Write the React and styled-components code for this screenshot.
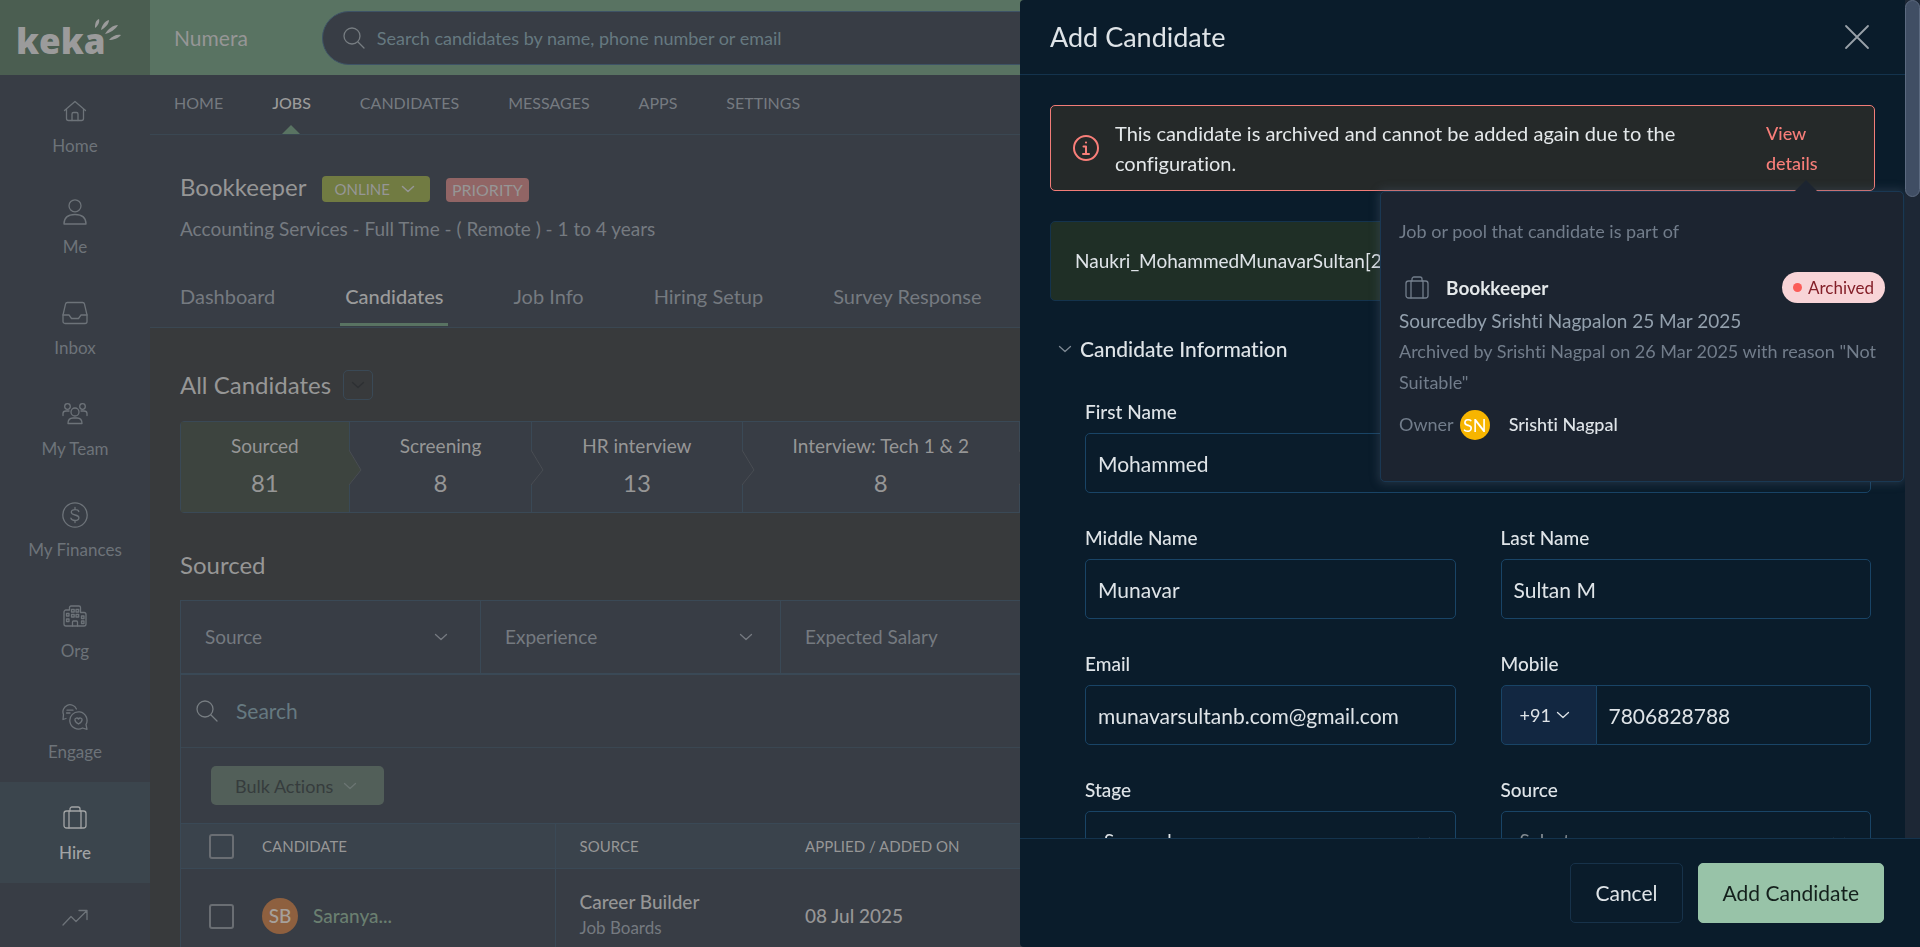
import styled, { createGlobalStyle, css } from 'styled-components';

const GlobalStyle = createGlobalStyle`
  *, *::before, *::after {
    box-sizing: border-box;
  }
  body {
    margin: 0;
    background: #383a3c;
    color: #969696;
    font-family: Lato, 'Open Sans', sans-serif;
    font-size: 18px;
    font-variant-ligatures: none;
    line-height: 24px;
    overflow: hidden;
  }
  button, input, select {
    font: inherit;
    color: inherit;
  }
  h1, h2, h3, p {
    margin: 0;
    font-weight: 400;
  }
  a {
    color: inherit;
    text-decoration: none;
  }
`;

/* ---------- icons ---------- */

const Svg = styled.svg`
  display: block;
  flex: none;
  fill: none;
  stroke: currentColor;
  stroke-linecap: round;
  stroke-linejoin: round;
`;

const Icon = ({ w = 26, h = w, stroke = 1.3, children, ...rest }) => (
  <Svg width={w} height={h} viewBox={`0 0 ${w} ${h}`} strokeWidth={stroke} aria-hidden="true" {...rest}>
    {children}
  </Svg>
);

const Chevron = (props) => (
  <Icon w={14} h={8} {...props}>
    <path d="M1.5 1.5 7 6.5l5.5-5" />
  </Icon>
);

const SearchIcon = () => (
  <Icon w={22}>
    <circle cx="9" cy="9" r="8" />
    <path d="m15 15 6 6" />
  </Icon>
);

const CaseIcon = (props) => (
  <Icon {...props}>
    <rect x="2" y="6" width="22" height="17" rx="2.5" />
    <path d="M8 6V4a2 2 0 0 1 2-2h6a2 2 0 0 1 2 2v2M7 6v17M19 6v17" />
  </Icon>
);

const HomeIcon = () => (
  <Icon>
    <path d="M2.5 12.5 13 3.5l10.5 9M4.5 11v9.5a2 2 0 0 0 2 2h13a2 2 0 0 0 2-2V11" />
    <path d="M10 22.5V16a1.5 1.5 0 0 1 1.5-1.5h3A1.5 1.5 0 0 1 16 16v6.5" />
  </Icon>
);

const MeIcon = () => (
  <Icon>
    <circle cx="13" cy="6.8" r="6" />
    <path d="M2 25c0-6 4-9.5 11-9.5S24 19 24 25Z" />
  </Icon>
);

const InboxIcon = () => (
  <Icon>
    <path d="M5.5 2.5h15a2 2 0 0 1 2 1.6L25 15v6.500a2 2 0 0 1-2 2H3a2 2 0 0 1-2-2V15L3.500 4.100a2 2 0 0 1 2-1.600Z" />
    <path d="M1 15h6l2.500 3.500h7L19 15h6" />
  </Icon>
);

const TeamIcon = () => (
  <Icon>
    <circle cx="13" cy="11" r="4" />
    <circle cx="5.5" cy="5.5" r="2.8" />
    <circle cx="20.5" cy="5.5" r="2.8" />
    <path d="M6 22.5c0-4 2-5.5 5-5.5h4c3 0 5 1.5 5 5.5ZM1 14.5v-2c0-2 1-2.5 3-2.5h3M25 14.5v-2c0-2-1-2.5-3-2.5h-3" />
  </Icon>
);

const FinanceIcon = () => (
  <Icon>
    <circle cx="13" cy="13" r="12.2" />
    <path d="M16.8 9.5C16.4 8 15 7.6 13 7.6c-2.2 0-3.7.9-3.7 2.6 0 3.8 7.600 1.800 7.600 5.600 0 1.700-1.600 2.700-3.900 2.700s-3.800-.7-4.100-2.300M13 5.500v2M13 18.500v2" />
  </Icon>
);

const OrgIcon = () => (
  <Icon>
    <path d="M7.5 7V4.5a1.5 1.5 0 0 1 1.5-1.5h8a1.5 1.5 0 0 1 1.5 1.5v5M7.5 7H4a2 2 0 0 0-2 2v12a2 2 0 0 0 2 2h18a2 2 0 0 0 2-2V11.5a2 2 0 0 0-2-2h-3.5" />
    <path d="M10.5 23v-4a1 1 0 0 1 1-1h3a1 1 0 0 1 1 1v4" />
    <path d="M9.5 6.5h2.7v2.5H9.5zM14 6.5h2.7v2.5H14zM9.5 11.5h2.7V14H9.5zM14 11.5h2.7V14H14zM4.5 10.5h2.5V13H4.5zM4.5 16h2.5v2.5H4.5zM19.5 13h2.5v2.5h-2.5zM19.5 18h2.5v2.5h-2.5z" />
  </Icon>
);

const EngageIcon = () => (
  <Icon>
    <path d="M4 14.500 1 15.500l.5-5A7 7 0 1 1 14.400 5M5 6.200h6M4.500 9h3.500" />
    <path d="M24 20.500a8.600 8.600 0 1 0-3.500 3.500l4.500 1.300Z" />
    <path d="M16.500 20c-2.300-1.300-3.600-2.700-3.600-4.200 0-2 2.700-2.500 3.600-.7.9-1.800 3.600-1.300 3.600.7 0 1.500-1.300 2.900-3.600 4.200Z" />
  </Icon>
);

const TrendIcon = () => (
  <Icon>
    <path d="m1 19 8-8.500 5 5L25 4.500M17 4.500h8v9" />
  </Icon>
);

const InfoIcon = () => (
  <Icon stroke={2}>
    <circle cx="13" cy="13" r="12" />
    <path d="M10.5 11.5H13V19M10 19h6M12.9 7.5h.2" />
  </Icon>
);

/* ---------- page behind the drawer ---------- */

const Shell = styled.div`
  display: grid;
  grid-template: 75px minmax(0, 1fr) / 150px minmax(0, 1fr);
  height: 100vh;
  overflow: hidden;
`;

const LogoCell = styled.a`
  background: #4b5e51;
  padding: 14px 0 0 16px;
  svg {
    display: block;
  }
  text {
    font-family: 'Open Sans', Lato, sans-serif;
    font-weight: 800;
    font-size: 35px;
  }
`;

const TopBar = styled.header`
  display: flex;
  align-items: center;
  gap: 74px;
  padding-left: 24px;
  background: #597362;
`;

const Company = styled.span`
  font-size: 21px;
`;

const GlobalSearch = styled.label`
  display: flex;
  align-items: center;
  gap: 12px;
  width: 900px;
  height: 54px;
  padding: 0 20px;
  border: 1px solid #3e5366;
  border-radius: 27px;
  background: #383d45;
  color: #777d82;
`;

const BareInput = styled.input`
  flex: 1;
  min-width: 0;
  padding: 0;
  border: 0;
  outline: 0;
  background: none;
  font-size: ${({ $size }) => $size || 18}px;
  &::placeholder {
    color: #667980;
    opacity: 1;
  }
`;

const Sidebar = styled.nav`
  background: #383d45;
  overflow: hidden;
`;

const SideItem = styled.a`
  display: flex;
  flex-direction: column;
  align-items: center;
  gap: 10px;
  height: 101px;
  padding-top: 23px;
  font-size: 17px;
  color: #6d7379;
  ${({ $active }) =>
    $active &&
    css`
      background: #3b454d;
      color: #a2a4a5;
      font-weight: 500;
    `}
`;

const Main = styled.main`
  min-width: 0;
  overflow: hidden;
`;

const SubNav = styled.nav`
  display: flex;
  gap: 49px;
  height: 60px;
  padding-left: 24px;
  border-bottom: 1px solid #3a4752;
  background: #383d45;
`;

const SubLink = styled.a`
  position: relative;
  line-height: 56px;
  font-size: 16px;
  color: ${({ $active }) => ($active ? '#9b9b9b' : '#757a80')};
  font-weight: ${({ $active }) => ($active ? 500 : 400)};
  ${({ $active }) =>
    $active &&
    css`
      &::after {
        content: '';
        position: absolute;
        left: 50%;
        bottom: 0;
        margin-left: -9px;
        border: 9px solid transparent;
        border-top: 0;
        border-bottom-color: #597362;
      }
    `}
`;

const JobHeader = styled.section`
  padding: 37px 30px 0;
  border-bottom: 1px solid #3a4752;
  background: #383d45;
`;

const TitleRow = styled.div`
  display: flex;
  align-items: flex-end;
  gap: 16px;
  height: 30px;
`;

const Title = styled.h1`
  font-size: 24px;
  line-height: 30px;
`;

const StatusButton = styled.button`
  display: flex;
  align-items: center;
  gap: 11px;
  height: 26px;
  padding: 0 15px 0 12px;
  border: 0;
  border-radius: 4px;
  background: #717b42;
  font-size: 15px;
`;

const Priority = styled.span`
  height: 24px;
  padding: 0 6px;
  border-radius: 4px;
  background: #916565;
  font-size: 16px;
`;

const JobMeta = styled.p`
  margin-top: 15px;
  color: #757a80;
  font-size: 19px;
`;

const Tabs = styled.nav`
  display: flex;
  gap: 60px;
  margin: 37px -5px 1px;
`;

const Tab = styled.a`
  height: 48px;
  padding: 6px 5px 0;
  font-size: 20px;
  color: ${({ $active }) => ($active ? '#9b9b9b' : '#757a80')};
  font-weight: ${({ $active }) => ($active ? 500 : 400)};
  border-bottom: 3px solid ${({ $active }) => ($active ? '#597362' : 'transparent')};
`;

const Content = styled.div`
  padding: 42px 30px 0;
`;

const SectionTitle = styled.h2`
  font-size: 24px;
  line-height: 30px;
`;

const HeadingRow = styled.div`
  display: flex;
  gap: 12px;
`;

const SquareButton = styled.button`
  display: grid;
  place-items: center;
  width: 30px;
  height: 30px;
  padding: 0;
  border: 1px solid #3a4956;
  border-radius: 5px;
  background: none;
  color: #2d3033;
`;

const Pipeline = styled.div`
  display: flex;
  height: 92px;
  margin: 21px 0 37px;
  border: 1px solid #3a4956;
  border-radius: 4px;
  background: #383d45;
`;

const Stage = styled.a`
  position: relative;
  display: flex;
  flex: none;
  flex-direction: column;
  align-items: center;
  gap: 13px;
  padding: 12px 50px 0;
  border-right: 1px solid #3a4956;
  background: ${({ $active }) => ($active ? '#3d443f' : 'none')};
  font-size: 19px;
  strong {
    font-size: 24px;
    font-weight: 400;
  }
`;

const StageArrow = styled(Svg)`
  position: absolute;
  left: 100%;
  top: 27px;
  z-index: 1;
`;

const Panel = styled.div`
  margin-top: 20px;
  border: 1px solid #3a4956;
  background: #383d45;
`;

const Filters = styled.div`
  display: flex;
  border-bottom: 2px solid #3a4956;
`;

const SelectBox = styled.div`
  display: grid;
  align-items: center;
  select,
  svg {
    grid-area: 1 / 1;
  }
  svg {
    justify-self: end;
    margin-right: ${({ $inset }) => $inset}px;
    pointer-events: none;
  }
  select {
    width: 100%;
    height: 100%;
    appearance: none;
    border: 0;
    outline: 0;
    background: none;
  }
`;

const Filter = styled(SelectBox)`
  flex: none;
  width: 300px;
  height: 72px;
  border-right: 1px solid #3a4956;
  color: #757a80;
  font-size: 19px;
  select {
    padding: 0 24px;
  }
`;

const SearchRow = styled.label`
  display: flex;
  align-items: center;
  gap: 18px;
  height: 73px;
  padding: 0 15px;
  border-bottom: 1px solid #3a4752;
  color: #777d82;
`;

const BulkRow = styled.div`
  padding: 18px 30px;
`;

const BulkButton = styled.button`
  display: flex;
  align-items: center;
  gap: 10px;
  height: 39px;
  padding: 0 27px 0 24px;
  border: 0;
  border-radius: 5px;
  background: #525f59;
  color: #363c3d;
  svg {
    color: #6b7573;
  }
`;

const Table = styled.table`
  width: 100%;
  table-layout: fixed;
  border-collapse: collapse;
  text-align: left;
  th {
    height: 45px;
    padding: 0 24px;
    border: solid #3a4956;
    border-width: 1px 0;
    background: #3a434c;
    font-size: 15px;
    font-weight: 400;
  }
  td {
    height: 95px;
    padding: 0 24px;
    font-size: 19px;
    font-weight: 500;
  }
  th:nth-child(2),
  td:nth-child(2) {
    padding-left: 0;
    border-right: 1px solid #3a4956;
  }
  th:first-child,
  td:first-child {
    padding: 0 0 0 28px;
  }
  small {
    display: block;
    color: #757a80;
    font-size: 17px;
    font-weight: 400;
    line-height: 28px;
  }
`;

const Check = styled.input`
  display: block;
  appearance: none;
  width: 25px;
  height: 25px;
  margin: 0;
  border: 2px solid #6a6e73;
  border-radius: 3px;
`;

const Avatar = styled.span`
  display: inline-grid;
  place-items: center;
  flex: none;
  width: ${({ $size }) => $size}px;
  height: ${({ $size }) => $size}px;
  border-radius: 50%;
  background: ${({ $color }) => $color};
`;

const Person = styled.a`
  display: flex;
  align-items: center;
  gap: 15px;
  color: #6a7f70;
  ${Avatar} {
    color: #a6a09b;
  }
`;

/* ---------- drawer ---------- */

const Drawer = styled.aside`
  position: fixed;
  inset: 0 0 0 auto;
  z-index: 10;
  display: flex;
  flex-direction: column;
  width: 900px;
  max-width: 100vw;
  overflow: hidden;
  border-radius: 4px 0 0 4px;
  background: #0a1c2b;
  color: #dfe4e8;
`;

const DrawerScroll = styled.div`
  display: flex;
  flex: 1;
  min-height: 0;
`;

const DrawerPane = styled.div`
  flex: 1;
  min-width: 0;
  overflow: hidden;
`;

const Rail = styled.div`
  width: 15px;
  background: #1d2735;
`;

const Thumb = styled.div`
  height: 197px;
  border: 1px solid #5c6a80;
  border-radius: 8px;
  background: #404e64;
`;

const DrawerHeader = styled.header`
  display: flex;
  align-items: center;
  justify-content: space-between;
  height: 75px;
  padding: 0 35px 0 30px;
  border-bottom: 1px solid #14334d;
  h2 {
    font-size: 27px;
    line-height: 36px;
  }
`;

const CloseButton = styled.button`
  padding: 0;
  border: 0;
  background: none;
  color: #99a1a9;
`;

const DrawerBody = styled.div`
  padding: 30px;
`;

const Alert = styled.div`
  position: relative;
  display: flex;
  align-items: center;
  height: 86px;
  padding: 0 22px;
  border: 1px solid #f27c78;
  border-radius: 5px;
  background: #252929;
  color: #f87e79;
  line-height: 30px;
`;

const AlertText = styled.p`
  flex: 1;
  margin: 0 66px 0 16px;
  color: #e4e8ea;
  font-size: 20px;
`;

const ViewDetails = styled.a`
  width: 86px;
  font-weight: 500;
`;

const Popover = styled.div`
  position: absolute;
  top: 85px;
  right: -30px;
  z-index: 2;
  width: 524px;
  height: 291px;
  padding: 24px 18px;
  border: 1px solid #1a3853;
  border-radius: 5px;
  background: #1c2430;
  box-shadow: 0 0 8px 2px rgba(70, 85, 105, 0.4);
  color: #727d8b;
  line-height: 31px;
`;

const PopoverArrow = styled.span`
  position: absolute;
  bottom: 100%;
  right: 85px;
  border: 12px solid transparent;
  border-top: 0;
  border-bottom-color: #1c2430;
`;

const PoolRow = styled.div`
  display: flex;
  align-items: center;
  margin: 25px 0 0 5px;
  h3 {
    flex: 1;
    margin-left: 16px;
    color: #e4e8ea;
    font-size: 19px;
    font-weight: 700;
  }
`;

const Pill = styled.span`
  display: flex;
  align-items: center;
  gap: 6px;
  height: 31px;
  padding: 0 11px;
  border-radius: 16px;
  background: #f8d4d7;
  color: #842029;
  font-size: 17px;
  &::before {
    content: '';
    width: 9px;
    height: 9px;
    border-radius: 50%;
    background: #fb5c58;
  }
`;

const SourcedBy = styled.p`
  margin-top: 2px;
  color: #93a0ad;
  font-size: 19px;
`;

const OwnerRow = styled.div`
  display: flex;
  align-items: center;
  gap: 6px;
  margin-top: 11px;
  ${Avatar} {
    color: #fff;
  }
  b {
    margin-left: 13px;
    color: #dfe4e8;
    font-weight: 500;
  }
`;

const FileBox = styled.div`
  display: flex;
  align-items: center;
  height: 80px;
  margin: 30px 0 33px;
  padding: 0 24px;
  border: 1px solid #14334d;
  border-radius: 5px;
  background: #1f2f26;
  font-size: 19px;
`;

const GroupToggle = styled.button`
  display: flex;
  align-items: center;
  gap: 8px;
  height: 30px;
  padding: 0;
  margin-left: 8px;
  border: 0;
  background: none;
  font-size: 21px;
  font-weight: 500;
  svg {
    color: #7d8893;
  }
`;

const Form = styled.form`
  display: grid;
  grid-template-columns: 1fr 1fr;
  gap: 33px 45px;
  margin: 36px 4px 0 35px;
`;

const Field = styled.div`
  display: grid;
  grid-template-rows: 24px 60px;
  gap: 9px;
  grid-column: ${({ $wide }) => ($wide ? '1 / -1' : 'auto')};
  label {
    font-size: 19px;
    font-weight: 500;
  }
`;

const fieldBox = css`
  width: 100%;
  height: 60px;
  border: 1px solid #194466;
  border-radius: 5px;
  background: transparent;
`;

const TextInput = styled.input`
  ${fieldBox}
  min-width: 0;
  padding: 0 12px;
  outline: 0;
  font-size: 21px;
`;

const FieldSelect = styled(SelectBox)`
  ${fieldBox}
  color: ${({ $empty }) => ($empty ? '#848c93' : 'inherit')};
  font-size: 19px;
  select {
    padding: 0 18px;
  }
`;

const Phone = styled.div`
  display: flex;
  ${TextInput} {
    border-left: 0;
    border-radius: 0 5px 5px 0;
  }
`;

const CodeSelect = styled(FieldSelect)`
  flex: none;
  width: 96px;
  border-radius: 5px 0 0 5px;
  background: #122741;
  font-size: 18px;
`;

const DrawerFooter = styled.footer`
  display: flex;
  gap: 15px;
  justify-content: flex-end;
  height: 109px;
  padding: 24px 36px;
  border-top: 1px solid #14334d;
`;

const Action = styled.button`
  height: 60px;
  padding: 0 24px;
  border: 1px solid ${({ $primary }) => ($primary ? '#98c3a8' : '#17324a')};
  border-radius: 5px;
  background: ${({ $primary }) => ($primary ? '#98c3a8' : 'transparent')};
  color: ${({ $primary }) => ($primary ? '#14201c' : '#dfe4e8')};
  font-size: 21px;
`;

const sideItems = [
  ['Home', HomeIcon],
  ['Me', MeIcon],
  ['Inbox', InboxIcon],
  ['My Team', TeamIcon],
  ['My Finances', FinanceIcon],
  ['Org', OrgIcon],
  ['Engage', EngageIcon],
  ['Hire', CaseIcon],
  ['', TrendIcon],
];

const stages = [
  ['Sourced', 81],
  ['Screening', 8],
  ['HR interview', 13],
  ['Interview: Tech 1 & 2', 8],
  ['', ''],
];

const Logo = () => (
  <svg width="110" height="50" viewBox="0 0 110 50" fill="#9b9b9b">
    <text x="0" y="40">keka</text>
    <path d="M79 14c0-5 1-8 4-9 1 3-1 7-4 9ZM85 16c1-5 4-9 8-10 0 4-4 8-8 10ZM89 20c3-5 8-9 13-9-2 4-8 8-13 9ZM93 26c3-4 8-6 12-5-2 3-8 5-12 5Z" />
  </svg>
);

const FormField = ({ id, label, value, wide }) => (
  <Field $wide={wide}>
    <label htmlFor={id}>{label}</label>
    <TextInput id={id} defaultValue={value} />
  </Field>
);

const JobPage = () => (
  <Shell>
    <LogoCell href="#" aria-label="keka">
      <Logo />
    </LogoCell>
    <TopBar>
      <Company>Numera</Company>
      <GlobalSearch>
        <SearchIcon />
        <BareInput
          aria-label="Search candidates"
          placeholder="Search candidates by name, phone number or email"
        />
      </GlobalSearch>
    </TopBar>

    <Sidebar>
      {sideItems.map(([label, ItemIcon]) => (
        <SideItem key={label} href="#" $active={label === 'Hire'} aria-label={label || 'Performance'}>
          <ItemIcon />
          {label}
        </SideItem>
      ))}
    </Sidebar>

    <Main>
      <SubNav>
        {['HOME', 'JOBS', 'CANDIDATES', 'MESSAGES', 'APPS', 'SETTINGS'].map((name) => (
          <SubLink key={name} href="#" $active={name === 'JOBS'}>
            {name}
          </SubLink>
        ))}
      </SubNav>

      <JobHeader>
        <TitleRow>
          <Title>Bookkeeper</Title>
          <StatusButton>
            ONLINE <Chevron stroke={1.5} />
          </StatusButton>
          <Priority>PRIORITY</Priority>
        </TitleRow>
        <JobMeta>Accounting Services - Full Time - ( Remote ) - 1 to 4 years</JobMeta>
        <Tabs>
          {['Dashboard', 'Candidates', 'Job Info', 'Hiring Setup', 'Survey Response'].map((name) => (
            <Tab key={name} href="#" $active={name === 'Candidates'}>
              {name}
            </Tab>
          ))}
        </Tabs>
      </JobHeader>

      <Content>
        <HeadingRow>
          <SectionTitle>All Candidates</SectionTitle>
          <SquareButton aria-label="Change list">
            <Chevron />
          </SquareButton>
        </HeadingRow>

        <Pipeline>
          {stages.map(([name, count], i) => (
            <Stage key={name} href="#" $active={i === 0}>
              <span>{name}</span>
              <strong>{count}</strong>
              <StageArrow width="13" height="38" viewBox="0 0 13 38" aria-hidden="true">
                <path d="M0 1 12 21 0 36" fill={i === 0 ? '#3d443f' : '#383d45'} stroke="#494d53" />
              </StageArrow>
            </Stage>
          ))}
        </Pipeline>

        <SectionTitle>Sourced</SectionTitle>
        <Panel>
          <Filters>
            {['Source', 'Experience', 'Expected Salary'].map((name, i) => (
              <Filter key={name} $inset={i === 0 ? 32 : 27}>
                <select aria-label={name}>
                  <option>{name}</option>
                </select>
                <Chevron />
              </Filter>
            ))}
          </Filters>
          <SearchRow>
            <SearchIcon />
            <BareInput $size={21} aria-label="Search" placeholder="Search" />
          </SearchRow>
          <BulkRow>
            <BulkButton>
              Bulk Actions <Chevron />
            </BulkButton>
          </BulkRow>
          <Table>
            <colgroup>
              <col style={{ width: 81 }} />
              <col style={{ width: 293 }} />
              <col style={{ width: 226 }} />
              <col />
            </colgroup>
            <thead>
              <tr>
                <th>
                  <Check type="checkbox" aria-label="Select all" />
                </th>
                <th>CANDIDATE</th>
                <th>SOURCE</th>
                <th>APPLIED / ADDED ON</th>
              </tr>
            </thead>
            <tbody>
              <tr>
                <td>
                  <Check type="checkbox" aria-label="Select Saranya" />
                </td>
                <td>
                  <Person href="#">
                    <Avatar $size={36} $color="#8e603f">SB</Avatar>
                    Saranya...
                  </Person>
                </td>
                <td>
                  Career Builder
                  <small>Job Boards</small>
                </td>
                <td>08 Jul 2025</td>
              </tr>
            </tbody>
          </Table>
        </Panel>
      </Content>
    </Main>
  </Shell>
);

const ArchivedPopover = () => (
  <Popover>
    <PopoverArrow />
    <div>Job or pool that candidate is part of</div>
    <PoolRow>
      <CaseIcon />
      <h3>Bookkeeper</h3>
      <Pill>Archived</Pill>
    </PoolRow>
    <SourcedBy>Sourcedby Srishti Nagpalon 25 Mar 2025</SourcedBy>
    <div>Archived by Srishti Nagpal on 26 Mar 2025 with reason "Not Suitable"</div>
    <OwnerRow>
      Owner
      <Avatar $size={30} $color="#f7b500">SN</Avatar>
      <b>Srishti Nagpal</b>
    </OwnerRow>
  </Popover>
);

const AddCandidateDrawer = () => (
  <Drawer>
    <DrawerScroll>
      <DrawerPane>
        <DrawerHeader>
          <h2>Add Candidate</h2>
          <CloseButton aria-label="Close">
            <Icon w={26} stroke={1.8}>
              <path d="m2 2 22 22M24 2 2 24" />
            </Icon>
          </CloseButton>
        </DrawerHeader>
        <DrawerBody>
          <Alert>
            <InfoIcon />
            <AlertText>This candidate is archived and cannot be added again due to the configuration.</AlertText>
            <ViewDetails href="#">
              View
              <br />
              details
            </ViewDetails>
            <ArchivedPopover />
          </Alert>
          <FileBox>Naukri_MohammedMunavarSultan[2</FileBox>
          <GroupToggle>
            <Chevron /> Candidate Information
          </GroupToggle>
          <Form>
            <FormField id="first" label="First Name" value="Mohammed" wide />
            <FormField id="middle" label="Middle Name" value="Munavar" />
            <FormField id="last" label="Last Name" value="Sultan M" />
            <FormField id="email" label="Email" value="munavarsultanb.com@gmail.com" />
            <Field>
              <label htmlFor="mobile">Mobile</label>
              <Phone>
                <CodeSelect $inset={26}>
                  <select aria-label="Country code">
                    <option>+91</option>
                  </select>
                  <Chevron />
                </CodeSelect>
                <TextInput id="mobile" defaultValue="7806828788" />
              </Phone>
            </Field>
            <Field>
              <label htmlFor="stage">Stage</label>
              <FieldSelect $inset={24}>
                <select id="stage">
                  <option>Sourced</option>
                </select>
                <Chevron />
              </FieldSelect>
            </Field>
            <Field>
              <label htmlFor="source">Source</label>
              <FieldSelect $inset={24} $empty>
                <select id="source">
                  <option>Select</option>
                </select>
                <Chevron />
              </FieldSelect>
            </Field>
          </Form>
        </DrawerBody>
      </DrawerPane>
      <Rail>
        <Thumb />
      </Rail>
    </DrawerScroll>
    <DrawerFooter>
      <Action>Cancel</Action>
      <Action $primary>Add Candidate</Action>
    </DrawerFooter>
  </Drawer>
);

const App = () => (
  <>
    <GlobalStyle />
    <JobPage />
    <AddCandidateDrawer />
  </>
);

export default App;
